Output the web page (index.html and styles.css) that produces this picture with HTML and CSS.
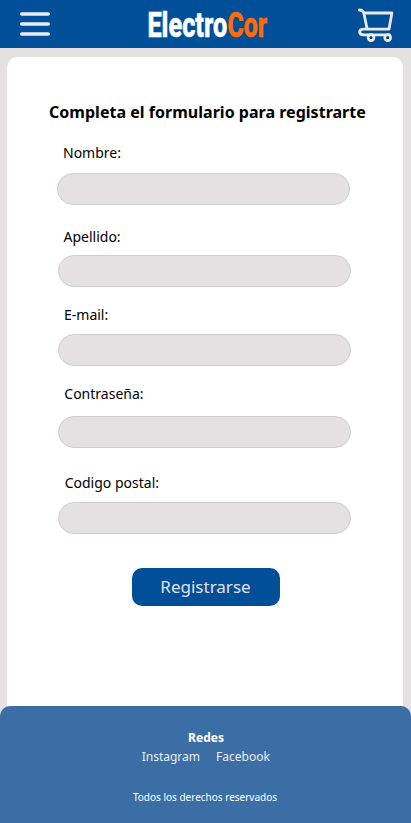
FILE: index.html
```html
<!DOCTYPE html>
<html lang="es">
<head>
<meta charset="utf-8">
<title>ElectroCor</title>
<link rel="stylesheet" href="styles.css">
</head>
<body>
<header class="topbar">
  <svg class="menu" width="30" height="24" viewBox="0 0 30 24" stroke="#e9edf0" stroke-width="3.6" stroke-linecap="round"><path d="M1.8 2H28.2M1.8 12H28.2M1.8 22H28.2"/></svg>
  <svg class="logo" width="122" height="48" viewBox="0 0 122 48">
    <text class="logo-text" y="36.6"><tspan x="-.6" textLength="79.8" lengthAdjust="spacingAndGlyphs" fill="#fff" stroke="#fff">Electro</tspan><tspan x="79.4" textLength="39.6" lengthAdjust="spacingAndGlyphs" fill="#ff6b0b" stroke="#ff6b0b">Cor</tspan></text>
  </svg>
  <svg class="cart" width="38" height="36" viewBox="0 0 38 36" fill="none" stroke="#eceae9" stroke-width="2.8" stroke-linecap="round" stroke-linejoin="round">
    <path d="M2.3 3Q6 3 6.8 6L10.2 22.2M6.8 6H34.9L32 22.2H7C1.2 22.2 1.2 27.8 7 27.8H32.5"/>
    <circle cx="14" cy="30.6" r="2.9"/><circle cx="30.7" cy="30.6" r="2.9"/>
    <path d="M14 30.8h.01M30.7 30.8h.01" stroke="#172b40" stroke-width="2.6"/>
  </svg>
</header>
<main class="card">
  <h1 class="title">Completa el formulario para registrarte</h1>
  <form class="form">
    <div class="row first"><label for="nombre">Nombre:</label><input id="nombre" type="text"></div>
    <div class="row surname"><label for="apellido">Apellido:</label><input id="apellido" type="text"></div>
    <div class="row email"><label for="email">E-mail:</label><input id="email" type="email"></div>
    <div class="row password"><label for="clave">Contraseña:</label><input id="clave" type="password"></div>
    <div class="row postal"><label for="postal">Codigo postal:</label><input id="postal" type="text"></div>
    <button class="submit" type="button">Registrarse</button>
  </form>
</main>
<footer class="footer">
  <strong class="networks">Redes</strong>
  <nav class="links"><a>Instagram</a><a>Facebook</a></nav>
  <small class="rights">Todos los derechos reservados</small>
</footer>
</body>
</html>
```
FILE: styles.css
```css
* { box-sizing: border-box; }
body {
  margin: 0;
  height: 823px;
  display: flex;
  flex-direction: column;
  overflow: hidden;
  background: #e5e1e2;
  color: #000;
  font-family: "Noto Sans", sans-serif;
}
.topbar {
  flex: none;
  height: 48px;
  display: flex;
  align-items: center;
  justify-content: space-between;
  padding: 0 16px 0 20px;
  background: #004f98;
}
.logo { margin: 0 0 0 11px; overflow: visible; }
.logo-text { font: 800 35px Roboto, sans-serif; stroke-width: .5px; }
.cart { position: relative; top: 1px; }
.card {
  flex: none;
  height: 660px;
  margin: 9px 8px 0 7px;
  padding-top: 44px;
  border-radius: 10px;
  background: #fff;
}
.title {
  margin: 0 0 0 42px;
  font-size: 16px;
  line-height: 22px;
  font-weight: 700;
  letter-spacing: .025px;
  white-space: nowrap;
}
.form {
  display: flex;
  flex-direction: column;
  padding-left: 51px;
}
.row {
  display: flex;
  flex-direction: column;
  width: 293px;
}
.row label {
  padding-left: 5.5px;
  font-size: 14px;
  line-height: 19px;
}
.row input {
  width: 293px;
  height: 32px;
  padding: 0 16px;
  border: 1px solid #cfcdce;
  border-radius: 16px;
  background: #e5e1e2;
  font: inherit;
}
.first { margin: 20px 0 0 -1px; gap: 11px; }
.surname { margin-top: 22px; gap: 9px; }
.email { margin-top: 18px; gap: 10px; }
.password { margin-top: 18px; gap: 13px; }
.postal { margin-top: 25px; gap: 10px; }
.row.first label { padding-left: 6px; }
.row.email label { padding-left: 6px; }
.row.password label { padding-left: 6.3px; }
.row.postal label { padding-left: 6.7px; }
.submit {
  width: 148px;
  height: 38px;
  margin: 34px 0 0 74px;
  padding: 0 1px 2px 0;
  border: 0;
  border-radius: 10px;
  background: #004f98;
  color: #e5e1e2;
  font: 400 17px "Noto Sans", sans-serif;
}
.footer {
  flex: none;
  position: relative;
  height: 117px;
  margin-top: -11px;
  padding: 24px 0 0;
  display: flex;
  flex-direction: column;
  align-items: center;
  border-radius: 10px 10px 0 0;
  background: #3c6ea6;
  color: #fff;
}
.networks { padding-left: 1px; font-size: 12px; line-height: 16px; }
.links {
  display: flex;
  gap: 16px;
  margin-top: 3px;
  font-size: 12px;
  line-height: 16px;
  color: #e9eef4;
}
.links a:first-child { padding-left: .5px; }
.rights {
  margin-top: 25px;
  padding-right: 1px;
  font-size: 10px;
  line-height: 14px;
}
```
